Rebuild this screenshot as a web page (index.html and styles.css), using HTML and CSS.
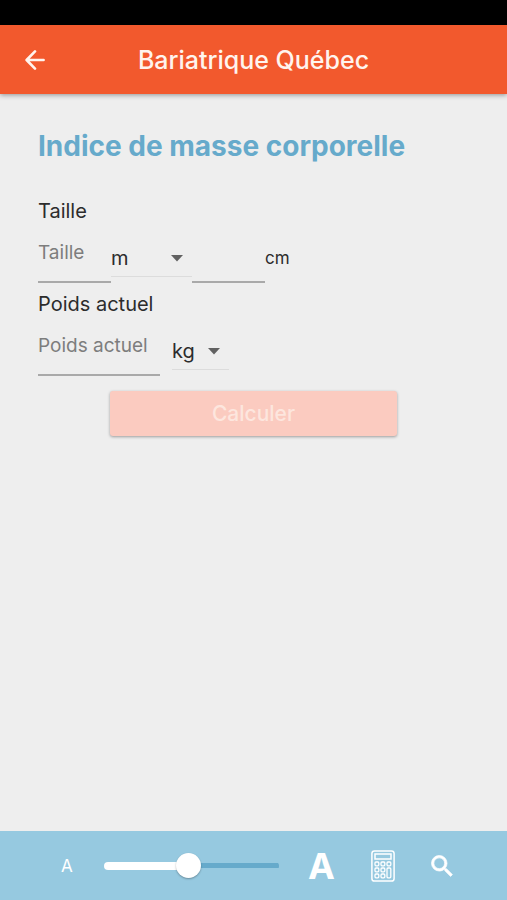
FILE: index.html
```html
<!DOCTYPE html>
<html lang="fr">
<head>
<meta charset="utf-8">
<meta name="viewport" content="width=device-width, initial-scale=1">
<title>Bariatrique Québec</title>
<link rel="stylesheet" href="styles.css">
</head>
<body>
<div class="status-bar"></div>
<header class="app-bar">
  <button class="icon-button" type="button" aria-label="Retour">
    <svg width="20" height="20" viewBox="0 0 20 20" fill="none" stroke="currentColor" stroke-width="2.6" stroke-linecap="round" stroke-linejoin="round"><path d="M18.6 10H1.8M10 1.4 1.6 10l8.4 8.6"/></svg>
  </button>
  <h1 class="app-title">Bariatrique Québec</h1>
</header>
<main class="content">
  <h2 class="page-title">Indice de masse corporelle</h2>
  <form>
    <div class="field">
      <label class="field-label" for="height">Taille</label>
      <div class="field-row">
        <input class="text-input short" id="height" type="text" placeholder="Taille">
        <div class="select wide">
          <select aria-label="Unité de taille"><option>m</option><option>pi</option></select>
          <svg class="caret" width="12" height="8" viewBox="0 0 12 8"><path d="M0 1h12L6 7.6z" fill="currentColor"/></svg>
        </div>
        <input class="text-input short" id="height-cm" type="text">
        <label class="unit" for="height-cm">cm</label>
      </div>
    </div>
    <div class="field">
      <label class="field-label" for="weight">Poids actuel</label>
      <div class="field-row spaced">
        <input class="text-input long" id="weight" type="text" placeholder="Poids actuel">
        <div class="select narrow">
          <select aria-label="Unité de poids"><option>kg</option><option>lb</option></select>
          <svg class="caret" width="12" height="8" viewBox="0 0 12 8"><path d="M0 1h12L6 7.6z" fill="currentColor"/></svg>
        </div>
      </div>
    </div>
    <button class="submit" type="submit" disabled>Calculer</button>
  </form>
</main>
<footer class="tool-bar">
  <span class="small-a">A</span>
  <input class="slider" type="range" min="0" max="100" value="48" aria-label="Taille du texte">
  <span class="large-a">A</span>
  <button class="icon-button calculator" type="button" aria-label="Calculatrice">
    <svg width="24" height="32" viewBox="0 0 24 32" fill="none" stroke="currentColor" stroke-width="1.5"><rect x=".9" y=".9" width="22.2" height="30.2" rx="2.6"/><rect x="4" y="4" width="16" height="5"/><g stroke-width="1.3"><rect x="4" y="12" width="3.8" height="3.8" rx="1"/><rect x="10" y="12" width="3.8" height="3.8" rx="1"/><rect x="16" y="12" width="3.8" height="3.8" rx="1"/><rect x="4" y="18" width="3.8" height="3.8" rx="1"/><rect x="10" y="18" width="3.8" height="3.8" rx="1"/><rect x="4" y="24" width="3.8" height="3.8" rx="1"/><rect x="10" y="24" width="3.8" height="3.8" rx="1"/><rect x="16" y="18" width="3.8" height="9.8" rx="1"/></g></svg>
  </button>
  <button class="icon-button" type="button" aria-label="Rechercher">
    <svg width="22" height="22" viewBox="2.6 2.6 18.4 18.4" fill="currentColor" stroke="currentColor" stroke-width=".6"><path d="M15.5 14h-.79l-.28-.27A6.47 6.47 0 0 0 16 9.5 6.5 6.5 0 1 0 9.5 16c1.61 0 3.09-.59 4.23-1.57l.27.28v.79l5 4.99L20.49 19zm-6 0C7.01 14 5 11.99 5 9.5S7.01 5 9.5 5 14 7.01 14 9.5 11.99 14 9.5 14"/></svg>
  </button>
</footer>
</body>
</html>
```
FILE: styles.css
```css
* {
  box-sizing: border-box;
}

body {
  display: flex;
  flex-direction: column;
  min-height: 100vh;
  margin: 0;
  background: #eeeeee;
  color: #2c2c2c;
  font-family: Inter, "Liberation Sans", sans-serif;
  font-size: 20px;
}

button,
input,
select {
  margin: 0;
  padding: 0;
  border: 0;
  border-radius: 0;
  background: none;
  color: inherit;
  font: inherit;
}

.status-bar {
  height: 25px;
  background: #000;
}

.app-bar {
  display: grid;
  grid-template-columns: 20px 1fr 20px;
  align-items: center;
  height: 69px;
  padding: 0 25px;
  background: #f2592d;
  color: #fff4ee;
  box-shadow: 0 1px 5px rgba(0, 0, 0, 0.4);
}

.icon-button {
  display: flex;
}

.app-title {
  margin: 0;
  font-size: 25px;
  font-weight: 500;
  text-align: center;
}

.content {
  flex: 1;
  padding: 36px 38px;
}

.page-title {
  margin: 0 0 32px;
  color: #66aacb;
  font-size: 28px;
  font-weight: 700;
  line-height: 33px;
}

.field {
  margin-bottom: 5px;
}

.field-label {
  display: block;
  line-height: 32px;
}

.field-row {
  display: flex;
  align-items: flex-end;
}

.spaced {
  gap: 12px;
}

.text-input {
  height: 56px;
  padding-bottom: 3px;
  border-bottom: 2px solid #a9a9a9;
  font-size: 19px;
}

.text-input::placeholder {
  color: #7d7d7d;
  opacity: 1;
}

.short {
  width: 73px;
}

.long {
  width: 122px;
}

.select {
  display: grid;
  align-items: center;
  height: 38px;
  margin-bottom: 6px;
  border-bottom: 1px solid #dcdcdc;
}

.select select,
.caret {
  grid-area: 1 / 1;
}

.select select {
  width: 100%;
  height: 100%;
  appearance: none;
}

.caret {
  justify-self: end;
  margin-right: 9px;
  color: #616161;
  pointer-events: none;
}

.wide {
  width: 81px;
}

.narrow {
  width: 57px;
}

.unit {
  margin-bottom: 6px;
  font-size: 17px;
  line-height: 38px;
}

.submit {
  display: block;
  width: calc(100% * 2 / 3);
  height: 45px;
  margin: 15px auto 0;
  border-radius: 3px;
  background: #fbcbc0;
  box-shadow: 0 1px 3px rgba(0, 0, 0, 0.35);
  color: #fde6de;
  font-size: 21px;
  font-weight: 500;
}

.tool-bar {
  display: flex;
  align-items: center;
  height: 69px;
  padding: 0 54px 0 61px;
  background: #96c9e0;
  color: #fff;
}

.small-a {
  width: 43px;
  font-size: 17px;
}

.slider {
  flex: 1;
  min-width: 0;
  height: 26px;
  appearance: none;
}

.slider::-webkit-slider-runnable-track {
  height: 8px;
  border-radius: 4px;
  background:
    linear-gradient(#fff, #fff) left center / 48% 8px no-repeat,
    linear-gradient(#66aacb, #66aacb) center / 100% 5px no-repeat;
}

.slider::-webkit-slider-thumb {
  width: 25px;
  height: 25px;
  margin-top: -9px;
  border-radius: 50%;
  background: #fff;
  box-shadow: 0 1px 2px rgba(0, 0, 0, 0.3);
  appearance: none;
}

.large-a {
  margin: 0 36px 0 29px;
  font-size: 36px;
  font-weight: 700;
}

.calculator {
  margin-right: 36px;
}
```
